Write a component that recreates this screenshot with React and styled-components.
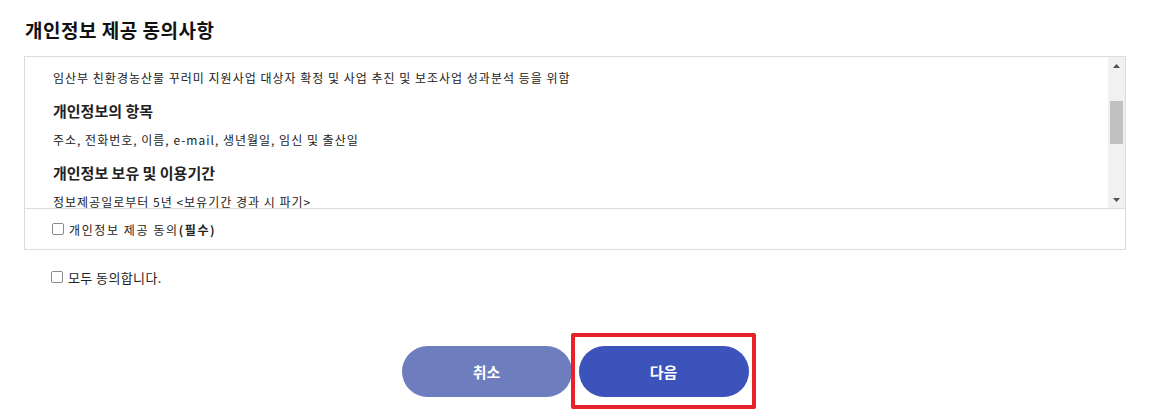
import React from 'react'
import styled, { createGlobalStyle } from 'styled-components'

const GlobalStyle = createGlobalStyle`
  html, body {
    margin: 0;
    padding: 0;
    background: #fff;
  }
  body {
    font-family: "Noto Sans CJK KR", "Noto Sans", sans-serif;
    color: #222;
  }
`

const Page = styled.div`
  box-sizing: border-box;
  width: 1126px;
  min-height: 414px;
  padding: 18px 0 0 24px;
`

const Title = styled.h2`
  margin: 0 0 14px 1px;
  font-size: 19px;
  line-height: 24px;
  font-weight: 700;
  letter-spacing: 0.5px;
  color: #111;
`

const Box = styled.div`
  border: 1px solid #dcdcdc;
`

const ScrollRow = styled.div`
  display: flex;
  height: 151px;
`

const Content = styled.div`
  flex: 1;
  overflow: hidden;
  padding: 12px 28px 0;
`

const Text = styled.p`
  margin: 0;
  font-size: 12px;
  line-height: 18px;
  letter-spacing: 1px;
  color: #222;
`

const Heading = styled.h3`
  margin: 14px 0 10px;
  font-size: 15px;
  line-height: 20px;
  font-weight: 700;
  color: #222;
`

const Scrollbar = styled.div`
  width: 17px;
  background: #f1f1f1;
  display: flex;
  flex-direction: column;
  align-items: center;
`

const Arrow = styled.div`
  height: 17px;
  width: 17px;
  display: flex;
  align-items: center;
  justify-content: center;
`

const Track = styled.div`
  flex: 1;
  width: 13px;
  padding-top: 27px;
`

const Thumb = styled.div`
  height: 43px;
  background: #c1c1c1;
`

const CheckRow = styled.label`
  display: flex;
  align-items: center;
  gap: 5px;
  height: 40px;
  padding-left: 27px;
  border-top: 1px solid #dcdcdc;
  font-size: 12px;
  letter-spacing: 1.6px;
  color: #222;
`

const AllRow = styled.label`
  display: flex;
  align-items: center;
  gap: 5px;
  height: 20px;
  margin-top: 17px;
  padding-left: 27px;
  font-size: 13px;
  letter-spacing: 0.4px;
  color: #222;
`

const Check = styled.input.attrs({ type: 'checkbox' })`
  appearance: none;
  margin: 0;
  width: 12px;
  height: 12px;
  border: 1px solid #8a8a8a;
  border-radius: 2px;
  background: #fff;
`

const Buttons = styled.div`
  display: flex;
  justify-content: center;
  gap: 7px;
  margin-top: 59px;
`

const Button = styled.button`
  display: block;
  width: 170px;
  height: 51px;
  border: none;
  border-radius: 26px;
  background: ${p => (p.$primary ? '#3b53ba' : '#6e7dbe')};
  color: #fff;
  font-family: "Noto Sans CJK KR", sans-serif;
  font-size: 15px;
  font-weight: 700;
  cursor: pointer;
`

const Highlight = styled.div`
  position: relative;
  display: flex;
  &::after {
    content: '';
    position: absolute;
    top: -13px;
    bottom: -12px;
    left: -8px;
    right: -7px;
    border: 4px solid #e8212b;
    border-radius: 2px;
    pointer-events: none;
  }
`

const Strong = styled.b`
  font-weight: 700;
`

const App = () => {
  return (
    <Page>
      <GlobalStyle />
      <Title>개인정보 제공 동의사항</Title>
      <Box>
        <ScrollRow>
          <Content>
            <Text>임산부 친환경농산물 꾸러미 지원사업 대상자 확정 및 사업 추진 및 보조사업 성과분석 등을 위함</Text>
            <Heading>개인정보의 항목</Heading>
            <Text>주소, 전화번호, 이름, e-mail, 생년월일, 임신 및 출산일</Text>
            <Heading>개인정보 보유 및 이용기간</Heading>
            <Text>정보제공일로부터 5년 &lt;보유기간 경과 시 파기&gt;</Text>
          </Content>
          <Scrollbar>
            <Arrow>
              <svg width="7" height="4" viewBox="0 0 7 4"><path d="M0 4 L3.5 0 L7 4 Z" fill="#505050" /></svg>
            </Arrow>
            <Track><Thumb /></Track>
            <Arrow>
              <svg width="7" height="4" viewBox="0 0 7 4"><path d="M0 0 L7 0 L3.5 4 Z" fill="#505050" /></svg>
            </Arrow>
          </Scrollbar>
        </ScrollRow>
        <CheckRow>
          <Check />
          <span>개인정보 제공 동의<Strong>(필수)</Strong></span>
        </CheckRow>
      </Box>
      <AllRow>
        <Check />
        <span>모두 동의합니다.</span>
      </AllRow>
      <Buttons>
        <Button>취소</Button>
        <Highlight>
          <Button $primary>다음</Button>
        </Highlight>
      </Buttons>
    </Page>
  )
}

export default App
